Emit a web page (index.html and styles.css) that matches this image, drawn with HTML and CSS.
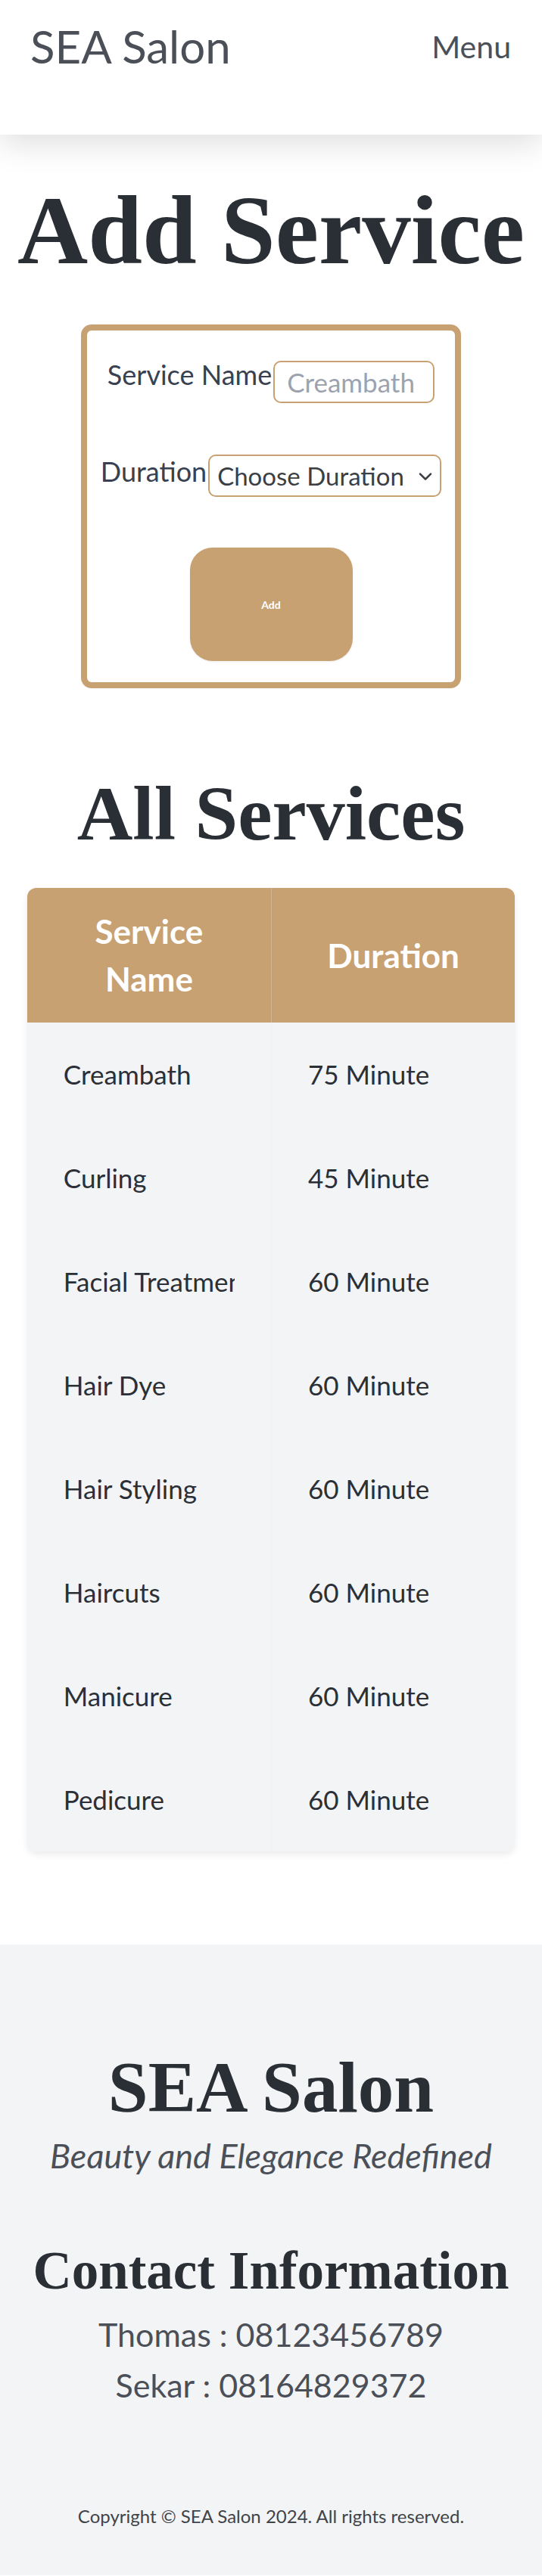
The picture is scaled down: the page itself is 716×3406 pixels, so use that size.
FILE: index.html
```html
<!DOCTYPE html>
<html lang="en">
<head>
<meta charset="utf-8">
<title>SEA Salon - Add Service</title>
<link rel="stylesheet" href="styles.css">
</head>
<body>
<header class="site-header">
  <nav class="nav">
    <a class="brand" href="#">SEA Salon</a>
    <button class="menu-btn" type="button">Menu</button>
  </nav>
</header>

<main>
  <section class="add-service">
    <h1 class="page-title">Add Service</h1>
    <form class="service-form">
      <div class="form-row">
        <label class="form-label" for="name">Service Name</label>
        <input class="text-input" id="name" type="text" placeholder="Creambath">
      </div>
      <div class="form-row">
        <label class="form-label" for="duration">Duration</label>
        <div class="select-wrap">
          <select class="select" id="duration">
            <option>Choose Duration</option>
            <option>30 Minute</option>
            <option>45 Minute</option>
            <option>60 Minute</option>
            <option>75 Minute</option>
          </select>
          <svg class="chevron" viewBox="0 0 18 11" aria-hidden="true"><path d="M2 2l7 7 7-7" fill="none" stroke="#3b3f45" stroke-width="2.6" stroke-linecap="round" stroke-linejoin="round"/></svg>
        </div>
      </div>
      <button class="add-btn" type="button">Add</button>
    </form>
  </section>

  <section class="services">
    <h2 class="section-title">All Services</h2>
    <div class="table">
      <div class="table-row table-head">
        <div class="th">Service Name</div>
        <div class="th">Duration</div>
      </div>
      <div class="table-row"><div class="td"><span class="td-text">Creambath</span></div><div class="td"><span class="td-text">75 Minute</span></div></div>
      <div class="table-row"><div class="td"><span class="td-text">Curling</span></div><div class="td"><span class="td-text">45 Minute</span></div></div>
      <div class="table-row"><div class="td"><span class="td-text">Facial Treatment</span></div><div class="td"><span class="td-text">60 Minute</span></div></div>
      <div class="table-row"><div class="td"><span class="td-text">Hair Dye</span></div><div class="td"><span class="td-text">60 Minute</span></div></div>
      <div class="table-row"><div class="td"><span class="td-text">Hair Styling</span></div><div class="td"><span class="td-text">60 Minute</span></div></div>
      <div class="table-row"><div class="td"><span class="td-text">Haircuts</span></div><div class="td"><span class="td-text">60 Minute</span></div></div>
      <div class="table-row"><div class="td"><span class="td-text">Manicure</span></div><div class="td"><span class="td-text">60 Minute</span></div></div>
      <div class="table-row"><div class="td"><span class="td-text">Pedicure</span></div><div class="td"><span class="td-text">60 Minute</span></div></div>
    </div>
  </section>
</main>

<footer class="site-footer">
  <h2 class="footer-brand">SEA Salon</h2>
  <p class="tagline">Beauty and Elegance Redefined</p>
  <h3 class="contact-title">Contact Information</h3>
  <div class="contact-list">
    <p class="contact-item">Thomas : 08123456789</p>
    <p class="contact-item">Sekar : 08164829372</p>
  </div>
  <p class="copyright">Copyright © SEA Salon 2024. All rights reserved.</p>
</footer>
</body>
</html>
```

FILE: styles.css
```css
* { box-sizing: border-box; }

body {
  margin: 0;
  font-family: Lato, "Open Sans", sans-serif;
  color: #2b2f36;
  background: #ffffff;
}

/* Header */
.site-header {
  height: 178px;
  background: #ffffff;
  box-shadow: 0 12px 40px rgba(0, 0, 0, 0.13);
  position: relative;
  z-index: 1;
}
.nav {
  height: 122px;
  display: flex;
  align-items: center;
  justify-content: space-between;
  padding: 0 41px 0 40px;
}
.brand {
  font-size: 60px;
  line-height: 1;
  color: #4b5058;
  text-decoration: none;
}
.menu-btn {
  font-family: inherit;
  font-size: 41px;
  line-height: 1;
  color: #4b5058;
  background: none;
  border: 0;
  padding: 0;
}

/* Titles */
.page-title,
.section-title,
.footer-brand,
.contact-title {
  font-family: "Liberation Serif", "Times New Roman", serif;
  font-weight: 700;
  color: #2a2e35;
  text-align: center;
}
.page-title {
  font-size: 129px;
  line-height: 129px;
  margin: 62px 0 0;
}
.section-title {
  font-size: 102px;
  line-height: 102px;
  margin: 115px 0 0;
}

/* Form */
.service-form {
  width: 70%;
  margin: 60px auto 0;
  border: 8px solid #c8a173;
  border-radius: 14px;
  padding: 40px 0 28px;
  display: flex;
  flex-direction: column;
  align-items: center;
}
.form-row {
  display: flex;
  align-items: flex-start;
  gap: 2px;
}
.form-row + .form-row { margin-top: 68px; }
.form-label {
  font-size: 36px;
  line-height: 36px;
  color: #374151;
}
.form-row + .form-row .form-label { padding-top: 4px; }
.text-input {
  width: 213px;
  height: 56px;
  border: 2px solid #c8a173;
  border-radius: 10px;
  padding: 0 16px;
  font-family: inherit;
  font-size: 35px;
  color: #374151;
  background: #ffffff;
  outline: none;
}
.text-input::placeholder { color: #9ca3af; }

.select-wrap { position: relative; }
.select {
  appearance: none;
  -webkit-appearance: none;
  display: block;
  width: 308px;
  height: 56px;
  border: 2px solid #c8a173;
  border-radius: 10px;
  padding: 0 30px 0 10px;
  font-family: inherit;
  font-size: 33px;
  color: #3b3f45;
  background: #ffffff;
  outline: none;
}
.chevron {
  position: absolute;
  right: 12px;
  top: 50%;
  width: 18px;
  height: 11px;
  transform: translateY(-40%);
  pointer-events: none;
}
.add-btn {
  margin-top: 67px;
  width: 215px;
  height: 150px;
  border: 0;
  border-radius: 30px;
  background: #c8a173;
  color: #ffffff;
  font-family: inherit;
  font-weight: 700;
  font-size: 14px;
  box-shadow: 0 1px 3px rgba(0, 0, 0, 0.08);
}

/* Table */
.table {
  width: 90%;
  margin: 47px auto 123px;
  border-radius: 12px;
  overflow: hidden;
  background: #f3f4f6;
  box-shadow: 0 4px 10px rgba(0, 0, 0, 0.08);
}
.table-row {
  display: grid;
  grid-template-columns: minmax(0, 1fr) minmax(0, 1fr);
}
.table-head {
  background: #c8a173;
  color: #ffffff;
}
.th {
  padding: 26px 48px;
  font-weight: 700;
  font-size: 44px;
  line-height: 63px;
  text-align: center;
  display: flex;
  align-items: center;
  justify-content: center;
}
.th + .th { border-left: 1px solid rgba(255, 255, 255, 0.22); }
.td {
  min-width: 0;
  padding: 42px 48px;
  font-size: 35px;
  line-height: 53px;
  color: #2b2f36;
}
.td + .td { border-left: 1px solid #eff0f3; }
.td-text {
  display: block;
  overflow: hidden;
  white-space: nowrap;
}

/* Footer */
.site-footer {
  background: #f3f4f6;
  padding: 142px 20px 66px;
  text-align: center;
}
.footer-brand {
  font-size: 95px;
  line-height: 95px;
  margin: 0;
}
.tagline {
  font-style: italic;
  font-size: 45px;
  line-height: 42px;
  margin: 21px 0 0;
  color: #4b5058;
}
.contact-title {
  font-size: 71px;
  line-height: 71px;
  margin: 96px 0 0;
}
.contact-list {
  margin-top: 15px;
  font-size: 43px;
  line-height: 67px;
  color: #4b5058;
}
.contact-item { margin: 0; }
.copyright {
  margin: 127px 0 0;
  font-size: 24px;
  line-height: 25px;
  color: #3f444a;
}
```
